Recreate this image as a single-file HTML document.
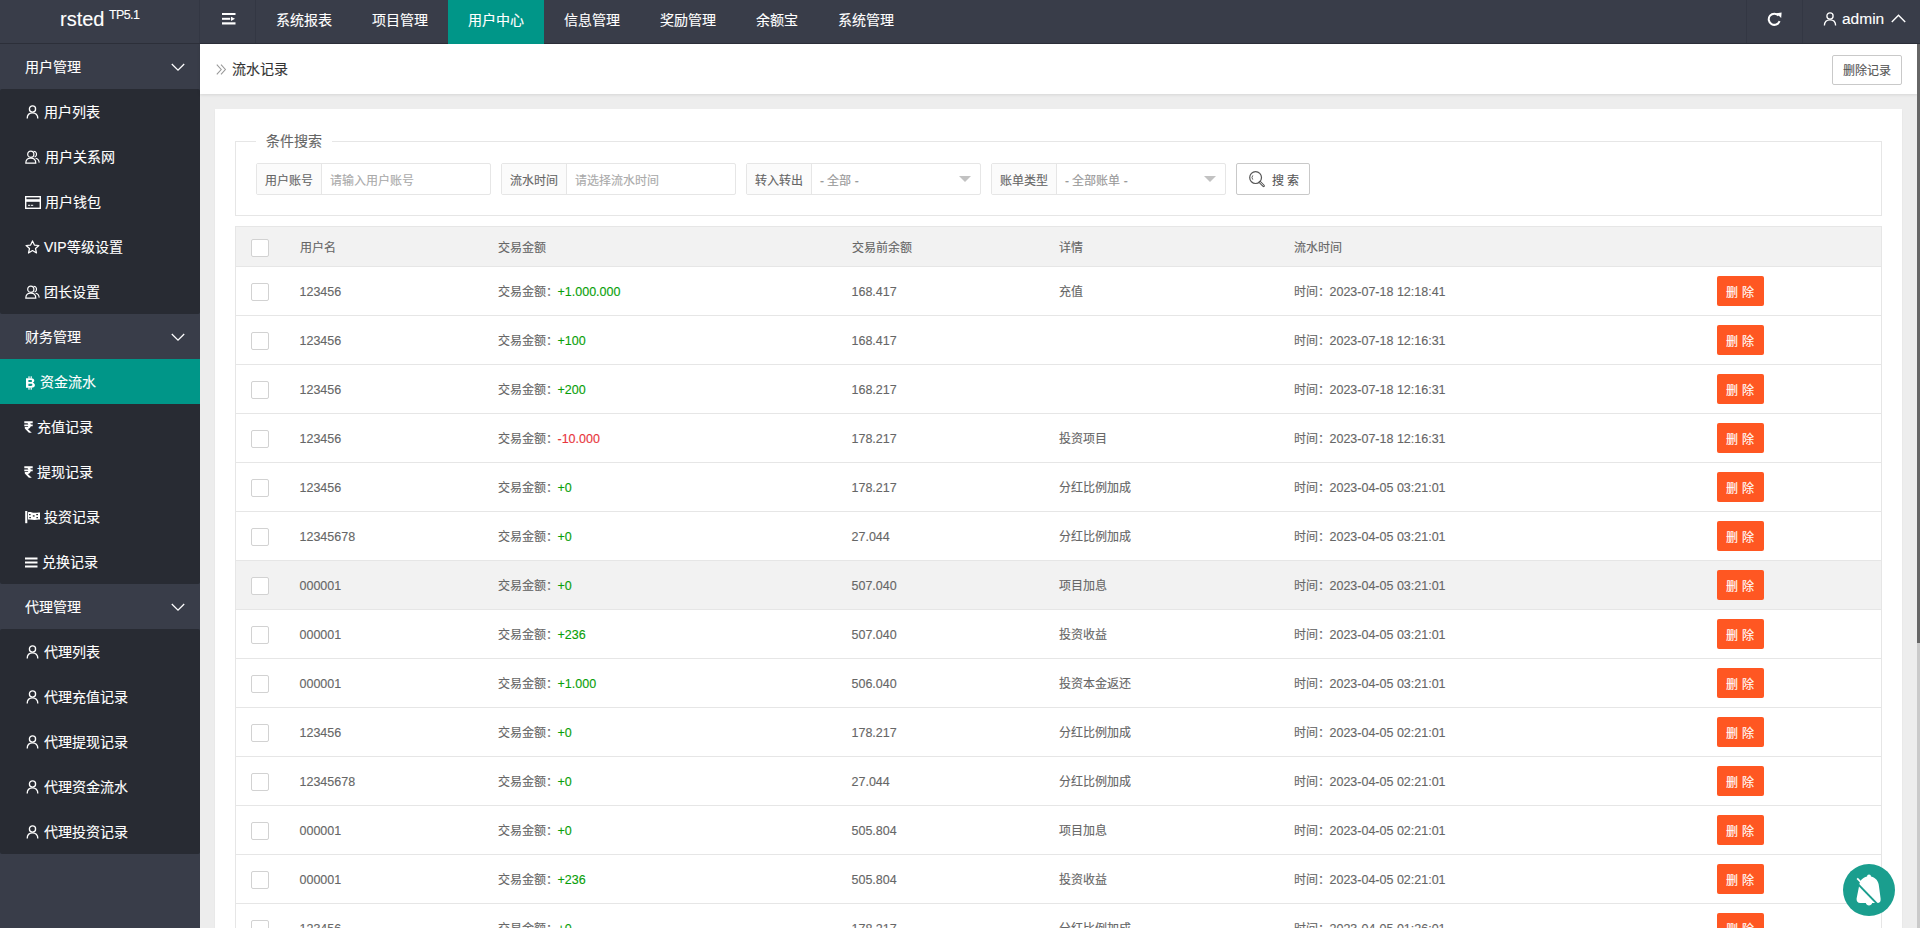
<!DOCTYPE html>
<html lang="zh-CN">
<head>
<meta charset="utf-8">
<title>流水记录</title>
<style>
*{margin:0;padding:0;box-sizing:border-box}
html,body{width:1920px;height:928px;overflow:hidden}
body{font-family:"Liberation Sans",sans-serif;font-size:14px;color:#666;background:#ededed;position:relative;-webkit-text-stroke-width:0.12px}
.abs{position:absolute}
i{font-style:normal}
#hdr{left:0;top:0;width:1920px;height:44px;background:#393d49;border-bottom:1px solid #2c2f39}
#logo{left:60px;top:-2px;height:43px;line-height:43px;color:#fff;font-size:20px;white-space:nowrap}
#logo sup{font-size:12.5px;position:relative;top:-7px;vertical-align:baseline;margin-left:4.5px;letter-spacing:-0.6px}
.vdiv{top:0;width:1px;height:43px;background:#333743}
.nav{top:0;height:43px;line-height:40px;color:#fff;font-size:14px;text-align:center;white-space:nowrap}
.nav.on{background:#009688;height:44px}
#side{left:0;top:44px;width:200px;height:884px;background:#393d49}
.grp{position:absolute;left:0;width:200px;height:45px;line-height:47px;color:#fff;font-size:14px;padding-left:25px}
.chev{position:absolute;left:171px;top:19px;line-height:0}
.kids{position:absolute;left:0;width:200px;background:#282b33;border-radius:2px}
.kid{position:absolute;left:0;width:200px;height:45px;line-height:45px;color:#fff;font-size:14px;white-space:nowrap}
.kid.on{background:#009688}
.kid .ico{position:absolute;top:16px;line-height:0}
.kid .kt{position:absolute;top:1px}
.ic-btc,.ic-inr{top:17px!important}
.ic-card{top:17px!important}
.ic-bars{top:18px!important}
.ic-flag{top:17px!important}
#crumb{left:200px;top:44px;width:1717px;height:50px;background:#fff;box-shadow:0 1px 3px rgba(0,0,0,.1)}
#crumbt{left:232px;top:44px;height:50px;line-height:50px;font-size:14px;color:#333}
#crumbi{left:216px;top:64px;line-height:0}
#delrec{left:1832px;top:55px;width:70px;height:30px;line-height:30px;border:1px solid #c9c9c9;border-radius:2px;background:#fff;font-size:12px;color:#555;text-align:center}
#card{left:215px;top:109px;width:1687px;height:830px;background:#fff;box-shadow:0 1px 2px rgba(0,0,0,.05)}
#sb{left:1917px;top:44px;width:3px;height:884px;background:#cacaca}
#sbt{left:1917px;top:44px;width:3px;height:599px;background:#666}
.fs{left:235px;top:141px;width:1647px;height:75px;border:1px solid #e6e6e6}
.legend{left:256px;top:132px;padding:0 10px;background:#fff;font-size:14px;line-height:18px;color:#666}
.ig{top:163px;height:32px;width:235px;border:1px solid #e6e6e6;border-radius:2px;background:#fff}
.ig .lb{position:absolute;left:0;top:0;width:65px;height:30px;line-height:34px;background:#fbfbfb;border-right:1px solid #e6e6e6;text-align:center;font-size:12px;color:#666}
.ig .ph{position:absolute;left:73px;top:0;height:30px;line-height:34px;font-size:12px;color:#aaa;white-space:nowrap}
.ig .edge{position:absolute;right:9px;top:12px;width:0;height:0;border-left:6px solid transparent;border-right:6px solid transparent;border-top:6px solid #c2c2c2}
#sbtn{left:1236px;top:163px;width:74px;height:32px;border:1px solid #c9c9c9;border-radius:2px;background:#fff;font-size:12px;color:#555;line-height:30px}
#sbtn svg{position:absolute;left:12px;top:7px}
#sbtn span{position:absolute;left:35px;top:2px}
table{position:absolute;left:235px;top:226px;width:1647px;border-collapse:collapse;table-layout:fixed;font-size:12px;color:#666;border:1px solid #e6e6e6}
th,td{text-align:left;font-weight:normal;padding:2px 0 0 15px;white-space:nowrap;overflow:hidden;line-height:20px}
th{height:40px;border-bottom:1px solid #e6e6e6;background:#f2f2f2}
td{height:49px;border-bottom:1px solid #e6e6e6}
tr.hv td{background:#f2f2f2}
th .cb{top:0}
.cb{display:inline-block;width:18px;height:18px;border:1px solid #d2d2d2;background:#fff;vertical-align:middle;border-radius:2px;position:relative;top:-1px}
.n{font-size:12.5px;position:relative;top:0px}
.g{color:#0a9f0a}
.r{color:#e8363c}
.del{display:inline-block;width:47px;height:30px;line-height:34px;margin-left:-1px;position:relative;top:-1px;background:#ff5722;color:#fff;border-radius:2px;text-align:center;font-size:12px;vertical-align:middle}
#bell{left:1843px;top:864px;width:52px;height:52px;border-radius:50%;background:#1a9e8e}
#bell svg{position:absolute;left:0;top:0}
</style>
</head>
<body>
<div id="hdr" class="abs"></div>
<div id="logo" class="abs">rsted<sup>TP5.1</sup></div>
<div class="abs vdiv" style="left:199px"></div>
<div class="abs vdiv" style="left:255px"></div>
<div class="abs" style="left:222px;top:13px;line-height:0">
<svg width="14" height="12" viewBox="0 0 14 12"><rect x="0" y="0" width="13.5" height="2" fill="#fff"/><rect x="0" y="4.8" width="8.2" height="2" fill="#fff"/><path d="M9 3.7 L13 5.8 L9 7.9Z" fill="#fff"/><rect x="0" y="9.3" width="13.5" height="2.2" fill="#fff"/></svg>
</div>
<div class="abs nav" style="left:256px;width:96px">系统报表</div>
<div class="abs nav" style="left:352px;width:96px">项目管理</div>
<div class="abs nav on" style="left:448px;width:96px">用户中心</div>
<div class="abs nav" style="left:544px;width:96px">信息管理</div>
<div class="abs nav" style="left:640px;width:96px">奖励管理</div>
<div class="abs nav" style="left:736px;width:82px">余额宝</div>
<div class="abs nav" style="left:818px;width:96px">系统管理</div>
<div class="abs vdiv" style="left:1746px"></div>
<div class="abs vdiv" style="left:1802px"></div>
<div class="abs" style="left:1767px;top:12px;line-height:0">
<svg width="16" height="15" viewBox="0 0 16 15"><path d="M12.6 9.2 A5.6 5.6 0 1 1 11.6 3.6" fill="none" stroke="#fff" stroke-width="2"/><path d="M9.2 1.2 L14.6 0.6 L14.2 6 Z" fill="#fff"/></svg>
</div>
<div class="abs" style="left:1823px;top:12px;line-height:0">
<svg width="14" height="14" viewBox="0 0 14 14"><circle cx="7" cy="4" r="3.1" fill="none" stroke="#fff" stroke-width="1.3"/><path d="M1.4 13.6 C1.4 9.6 3.6 7.8 7 7.8 C10.4 7.8 12.6 9.6 12.6 13.6" fill="none" stroke="#fff" stroke-width="1.3"/></svg>
</div>
<div class="abs" style="left:1842px;top:0;height:43px;line-height:38px;font-size:15.5px;color:#fff">admin</div>
<div class="abs" style="left:1891px;top:14px;line-height:0">
<svg width="15" height="9" viewBox="0 0 15 9"><path d="M0.8 8 L7.5 1.3 L14.2 8" fill="none" stroke="#fff" stroke-width="1.4"/></svg>
</div>

<div id="side" class="abs"></div>
<div class="kids" style="top:89px;height:225px"></div><div class="kids" style="top:359px;height:225px"></div><div class="kids" style="top:629px;height:225px"></div><div class="grp" style="top:44px">用户管理<span class="chev"><svg width="14" height="9" viewBox="0 0 14 9"><path d="M0.8 1 L7 7.2 L13.2 1" fill="none" stroke="#fff" stroke-width="1.3"/></svg></span></div>
<div class="kid " style="top:89px"><span class="ico ic-user" style="left:26px"><svg width="13" height="14" viewBox="0 0 13 14"><circle cx="6.5" cy="4" r="3.1" fill="none" stroke="#fff" stroke-width="1.3"/><path d="M1.2 13.5 C1.2 9.6 3.4 7.8 6.5 7.8 C9.6 7.8 11.8 9.6 11.8 13.5" fill="none" stroke="#fff" stroke-width="1.3"/></svg></span><span class="kt" style="left:44px">用户列表</span></div>
<div class="kid " style="top:134px"><span class="ico ic-users" style="left:25px"><svg width="15" height="14" viewBox="0 0 15 14"><circle cx="5.8" cy="4.2" r="3.1" fill="none" stroke="#fff" stroke-width="1.2"/><path d="M8.6 1.2 A3 3 0 0 1 9.6 7" fill="none" stroke="#fff" stroke-width="1.1"/><path d="M0.8 13.2 C0.8 9.8 2.8 8.2 5.8 8.2 C8.8 8.2 10.8 9.8 10.8 13.2 Z" fill="none" stroke="#fff" stroke-width="1.2"/><path d="M10.6 8.3 C12.8 8.8 14 10.3 14.2 12.6" fill="none" stroke="#fff" stroke-width="1.1"/></svg></span><span class="kt" style="left:45px">用户关系网</span></div>
<div class="kid " style="top:179px"><span class="ico ic-card" style="left:25px"><svg width="16" height="13" viewBox="0 0 16 13"><rect x="0.7" y="0.7" width="14.6" height="11.6" fill="none" stroke="#fff" stroke-width="1.4"/><rect x="0.7" y="3.2" width="14.6" height="2.6" fill="#fff"/><rect x="3" y="8.8" width="2.2" height="1" fill="#fff"/><rect x="6" y="8.8" width="2.2" height="1" fill="#fff"/></svg></span><span class="kt" style="left:45px">用户钱包</span></div>
<div class="kid " style="top:224px"><span class="ico ic-star" style="left:25px"><svg width="15" height="15" viewBox="0 0 15 15"><path d="M7.5 0.9 L9.4 5.1 L13.9 5.5 L10.5 8.5 L11.5 13 L7.5 10.6 L3.5 13 L4.5 8.5 L1.1 5.5 L5.6 5.1 Z" fill="none" stroke="#fff" stroke-width="1.2" stroke-linejoin="round"/></svg></span><span class="kt" style="left:44px">VIP等级设置</span></div>
<div class="kid " style="top:269px"><span class="ico ic-users" style="left:25px"><svg width="15" height="14" viewBox="0 0 15 14"><circle cx="5.8" cy="4.2" r="3.1" fill="none" stroke="#fff" stroke-width="1.2"/><path d="M8.6 1.2 A3 3 0 0 1 9.6 7" fill="none" stroke="#fff" stroke-width="1.1"/><path d="M0.8 13.2 C0.8 9.8 2.8 8.2 5.8 8.2 C8.8 8.2 10.8 9.8 10.8 13.2 Z" fill="none" stroke="#fff" stroke-width="1.2"/><path d="M10.6 8.3 C12.8 8.8 14 10.3 14.2 12.6" fill="none" stroke="#fff" stroke-width="1.1"/></svg></span><span class="kt" style="left:44px">团长设置</span></div>
<div class="grp" style="top:314px">财务管理<span class="chev"><svg width="14" height="9" viewBox="0 0 14 9"><path d="M0.8 1 L7 7.2 L13.2 1" fill="none" stroke="#fff" stroke-width="1.3"/></svg></span></div>
<div class="kid on" style="top:359px"><span class="ico ic-btc" style="left:25px"><svg width="11" height="14" viewBox="0 0 11 14"><path d="M1 2.3 H6.3 C8.4 2.3 9.3 3.3 9.3 4.6 C9.3 5.7 8.6 6.4 7.8 6.7 C9 7 9.9 7.9 9.9 9.2 C9.9 10.8 8.7 11.7 6.6 11.7 H1 Z M3.4 4.1 V6 H5.9 C6.6 6 7 5.6 7 5.05 C7 4.5 6.6 4.1 5.9 4.1 Z M3.4 7.7 V9.9 H6.1 C6.9 9.9 7.4 9.5 7.4 8.8 C7.4 8.1 6.9 7.7 6.1 7.7 Z" fill="#fff"/><rect x="3.4" y="0.3" width="1.2" height="2.2" fill="#fff"/><rect x="5.6" y="0.3" width="1.2" height="2.2" fill="#fff"/><rect x="3.4" y="11.5" width="1.2" height="2.2" fill="#fff"/><rect x="5.6" y="11.5" width="1.2" height="2.2" fill="#fff"/></svg></span><span class="kt" style="left:40px">资金流水</span></div>
<div class="kid " style="top:404px"><span class="ico ic-inr" style="left:24px"><svg width="9" height="12" viewBox="0 0 9 12"><path d="M0.3 0.3 H8.7 V2.2 H6.2 C6.5 2.6 6.7 3 6.8 3.4 H8.7 V5.2 H6.8 C6.4 6.8 5.2 7.7 3.8 7.9 L7.8 11.8 H4.9 L0.8 7.6 V6.1 H2.8 C3.6 6.1 4.1 5.8 4.3 5.2 H0.3 V3.4 H4.3 C4.1 2.8 3.6 2.2 2.8 2.2 H0.3 Z" fill="#fff"/></svg></span><span class="kt" style="left:37px">充值记录</span></div>
<div class="kid " style="top:449px"><span class="ico ic-inr" style="left:24px"><svg width="9" height="12" viewBox="0 0 9 12"><path d="M0.3 0.3 H8.7 V2.2 H6.2 C6.5 2.6 6.7 3 6.8 3.4 H8.7 V5.2 H6.8 C6.4 6.8 5.2 7.7 3.8 7.9 L7.8 11.8 H4.9 L0.8 7.6 V6.1 H2.8 C3.6 6.1 4.1 5.8 4.3 5.2 H0.3 V3.4 H4.3 C4.1 2.8 3.6 2.2 2.8 2.2 H0.3 Z" fill="#fff"/></svg></span><span class="kt" style="left:37px">提现记录</span></div>
<div class="kid " style="top:494px"><span class="ico ic-flag" style="left:25px"><svg width="16" height="13" viewBox="0 0 16 13"><rect x="0.2" y="0" width="2.1" height="12.2" fill="#fff"/><path d="M3 1.2 C5.5 0.6 7.5 1.8 9.5 1.8 C11.5 1.8 13 1.2 15 1.5 V8.6 C13 8.2 11.5 8.9 9.5 8.9 C7.5 8.9 5.5 8 3 8.6 Z" fill="#fff"/><g fill="#282b33"><rect x="4" y="3" width="1.6" height="1.2"/><rect x="7.8" y="4.3" width="1.8" height="1.3"/><rect x="4.3" y="6" width="1.6" height="1.2"/><rect x="11.2" y="3" width="1.8" height="1.2"/><rect x="11.4" y="6" width="1.6" height="1.2"/></g></svg></span><span class="kt" style="left:44px">投资记录</span></div>
<div class="kid " style="top:539px"><span class="ico ic-bars" style="left:25px"><svg width="13" height="11" viewBox="0 0 13 11"><rect x="0" y="0.5" width="12.5" height="2" fill="#fff"/><rect x="0" y="4.5" width="12.5" height="2" fill="#fff"/><rect x="0" y="8.5" width="12.5" height="2" fill="#fff"/></svg></span><span class="kt" style="left:42px">兑换记录</span></div>
<div class="grp" style="top:584px">代理管理<span class="chev"><svg width="14" height="9" viewBox="0 0 14 9"><path d="M0.8 1 L7 7.2 L13.2 1" fill="none" stroke="#fff" stroke-width="1.3"/></svg></span></div>
<div class="kid " style="top:629px"><span class="ico ic-user" style="left:26px"><svg width="13" height="14" viewBox="0 0 13 14"><circle cx="6.5" cy="4" r="3.1" fill="none" stroke="#fff" stroke-width="1.3"/><path d="M1.2 13.5 C1.2 9.6 3.4 7.8 6.5 7.8 C9.6 7.8 11.8 9.6 11.8 13.5" fill="none" stroke="#fff" stroke-width="1.3"/></svg></span><span class="kt" style="left:44px">代理列表</span></div>
<div class="kid " style="top:674px"><span class="ico ic-user" style="left:26px"><svg width="13" height="14" viewBox="0 0 13 14"><circle cx="6.5" cy="4" r="3.1" fill="none" stroke="#fff" stroke-width="1.3"/><path d="M1.2 13.5 C1.2 9.6 3.4 7.8 6.5 7.8 C9.6 7.8 11.8 9.6 11.8 13.5" fill="none" stroke="#fff" stroke-width="1.3"/></svg></span><span class="kt" style="left:44px">代理充值记录</span></div>
<div class="kid " style="top:719px"><span class="ico ic-user" style="left:26px"><svg width="13" height="14" viewBox="0 0 13 14"><circle cx="6.5" cy="4" r="3.1" fill="none" stroke="#fff" stroke-width="1.3"/><path d="M1.2 13.5 C1.2 9.6 3.4 7.8 6.5 7.8 C9.6 7.8 11.8 9.6 11.8 13.5" fill="none" stroke="#fff" stroke-width="1.3"/></svg></span><span class="kt" style="left:44px">代理提现记录</span></div>
<div class="kid " style="top:764px"><span class="ico ic-user" style="left:26px"><svg width="13" height="14" viewBox="0 0 13 14"><circle cx="6.5" cy="4" r="3.1" fill="none" stroke="#fff" stroke-width="1.3"/><path d="M1.2 13.5 C1.2 9.6 3.4 7.8 6.5 7.8 C9.6 7.8 11.8 9.6 11.8 13.5" fill="none" stroke="#fff" stroke-width="1.3"/></svg></span><span class="kt" style="left:44px">代理资金流水</span></div>
<div class="kid " style="top:809px"><span class="ico ic-user" style="left:26px"><svg width="13" height="14" viewBox="0 0 13 14"><circle cx="6.5" cy="4" r="3.1" fill="none" stroke="#fff" stroke-width="1.3"/><path d="M1.2 13.5 C1.2 9.6 3.4 7.8 6.5 7.8 C9.6 7.8 11.8 9.6 11.8 13.5" fill="none" stroke="#fff" stroke-width="1.3"/></svg></span><span class="kt" style="left:44px">代理投资记录</span></div>

<div id="crumb" class="abs"></div>
<div id="crumbi" class="abs"><svg width="11" height="11" viewBox="0 0 11 11"><path d="M0.8 0.6 L5.2 5.5 L0.8 10.4 M5 0.6 L9.4 5.5 L5 10.4" fill="none" stroke="#999" stroke-width="1.1"/></svg></div>
<div id="crumbt" class="abs">流水记录</div>
<div id="delrec" class="abs">删除记录</div>

<div id="card" class="abs"></div>
<div class="abs fs"></div>
<div class="abs legend">条件搜索</div>
<div class="abs ig" style="left:256px"><div class="lb">用户账号</div><div class="ph">请输入用户账号</div></div>
<div class="abs ig" style="left:501px"><div class="lb">流水时间</div><div class="ph">请选择流水时间</div></div>
<div class="abs ig" style="left:746px"><div class="lb">转入转出</div><div class="ph" style="color:#999">- 全部 -</div><i class="edge"></i></div>
<div class="abs ig" style="left:991px"><div class="lb">账单类型</div><div class="ph" style="color:#999">- 全部账单 -</div><i class="edge"></i></div>
<div id="sbtn" class="abs"><svg width="17" height="17" viewBox="0 0 17 17"><circle cx="6.6" cy="6.6" r="5.9" fill="none" stroke="#555" stroke-width="1.2"/><path d="M3.8 4.4 A3.4 3.4 0 0 0 3.8 8.6" fill="none" stroke="#555" stroke-width="0.9"/><path d="M10.9 11.1 L14.6 14.8" fill="none" stroke="#555" stroke-width="2.6" stroke-linecap="round"/><path d="M11.2 11.4 L14.3 14.5" fill="none" stroke="#fff" stroke-width="0.9" stroke-linecap="round"/></svg><span>搜 索</span></div>

<table>
<colgroup><col style="width:49px"><col style="width:198px"><col style="width:354px"><col style="width:207px"><col style="width:235px"><col style="width:424px"><col></colgroup>
<thead><tr><th><i class="cb"></i></th><th>用户名</th><th>交易金额</th><th>交易前余额</th><th>详情</th><th>流水时间</th><th></th></tr></thead>
<tbody>
<tr><td><i class="cb"></i></td><td><span class="n">123456</span></td><td>交易金额：<span class="n g">+1.000.000</span></td><td><span class="n">168.417</span></td><td>充值</td><td>时间：<span class="n">2023-07-18 12:18:41</span></td><td><span class="del">删 除</span></td></tr>
<tr><td><i class="cb"></i></td><td><span class="n">123456</span></td><td>交易金额：<span class="n g">+100</span></td><td><span class="n">168.417</span></td><td></td><td>时间：<span class="n">2023-07-18 12:16:31</span></td><td><span class="del">删 除</span></td></tr>
<tr><td><i class="cb"></i></td><td><span class="n">123456</span></td><td>交易金额：<span class="n g">+200</span></td><td><span class="n">168.217</span></td><td></td><td>时间：<span class="n">2023-07-18 12:16:31</span></td><td><span class="del">删 除</span></td></tr>
<tr><td><i class="cb"></i></td><td><span class="n">123456</span></td><td>交易金额：<span class="n r">-10.000</span></td><td><span class="n">178.217</span></td><td>投资项目</td><td>时间：<span class="n">2023-07-18 12:16:31</span></td><td><span class="del">删 除</span></td></tr>
<tr><td><i class="cb"></i></td><td><span class="n">123456</span></td><td>交易金额：<span class="n g">+0</span></td><td><span class="n">178.217</span></td><td>分红比例加成</td><td>时间：<span class="n">2023-04-05 03:21:01</span></td><td><span class="del">删 除</span></td></tr>
<tr><td><i class="cb"></i></td><td><span class="n">12345678</span></td><td>交易金额：<span class="n g">+0</span></td><td><span class="n">27.044</span></td><td>分红比例加成</td><td>时间：<span class="n">2023-04-05 03:21:01</span></td><td><span class="del">删 除</span></td></tr>
<tr class="hv"><td><i class="cb"></i></td><td><span class="n">000001</span></td><td>交易金额：<span class="n g">+0</span></td><td><span class="n">507.040</span></td><td>项目加息</td><td>时间：<span class="n">2023-04-05 03:21:01</span></td><td><span class="del">删 除</span></td></tr>
<tr><td><i class="cb"></i></td><td><span class="n">000001</span></td><td>交易金额：<span class="n g">+236</span></td><td><span class="n">507.040</span></td><td>投资收益</td><td>时间：<span class="n">2023-04-05 03:21:01</span></td><td><span class="del">删 除</span></td></tr>
<tr><td><i class="cb"></i></td><td><span class="n">000001</span></td><td>交易金额：<span class="n g">+1.000</span></td><td><span class="n">506.040</span></td><td>投资本金返还</td><td>时间：<span class="n">2023-04-05 03:21:01</span></td><td><span class="del">删 除</span></td></tr>
<tr><td><i class="cb"></i></td><td><span class="n">123456</span></td><td>交易金额：<span class="n g">+0</span></td><td><span class="n">178.217</span></td><td>分红比例加成</td><td>时间：<span class="n">2023-04-05 02:21:01</span></td><td><span class="del">删 除</span></td></tr>
<tr><td><i class="cb"></i></td><td><span class="n">12345678</span></td><td>交易金额：<span class="n g">+0</span></td><td><span class="n">27.044</span></td><td>分红比例加成</td><td>时间：<span class="n">2023-04-05 02:21:01</span></td><td><span class="del">删 除</span></td></tr>
<tr><td><i class="cb"></i></td><td><span class="n">000001</span></td><td>交易金额：<span class="n g">+0</span></td><td><span class="n">505.804</span></td><td>项目加息</td><td>时间：<span class="n">2023-04-05 02:21:01</span></td><td><span class="del">删 除</span></td></tr>
<tr><td><i class="cb"></i></td><td><span class="n">000001</span></td><td>交易金额：<span class="n g">+236</span></td><td><span class="n">505.804</span></td><td>投资收益</td><td>时间：<span class="n">2023-04-05 02:21:01</span></td><td><span class="del">删 除</span></td></tr>
<tr><td><i class="cb"></i></td><td><span class="n">123456</span></td><td>交易金额：<span class="n g">+0</span></td><td><span class="n">178.217</span></td><td>分红比例加成</td><td>时间：<span class="n">2023-04-05 01:26:01</span></td><td><span class="del">删 除</span></td></tr>
</tbody>
</table>

<div id="bell" class="abs"><svg width="52" height="52" viewBox="0 0 52 52"><g transform="translate(7 6)"><path d="M17 6.6 Q17 4.5 19 4.5 Q21 4.5 21 6.6 C25.6 7.6 28.6 11.2 29 16.6 L30.6 28.4 C31 30.8 29.8 33 27.4 33 L22.2 33 C21.8 34.6 20.6 35.4 19 35.4 C17.4 35.4 16.2 34.6 15.8 33 L10.2 33 C7.8 33 6.2 31 6.6 28.4 L9 16.6 C9.4 11.2 12.4 7.6 17 6.6 Z" fill="#fff"/><path d="M4.6 10.6 L28.6 35.4" stroke="#1a9e8e" stroke-width="2"/><path d="M7.2 8.4 L29.8 31.6" stroke="#fff" stroke-width="1.7"/></g></svg></div>
<div id="sb" class="abs"></div>
<div id="sbt" class="abs"></div>
</body>
</html>
